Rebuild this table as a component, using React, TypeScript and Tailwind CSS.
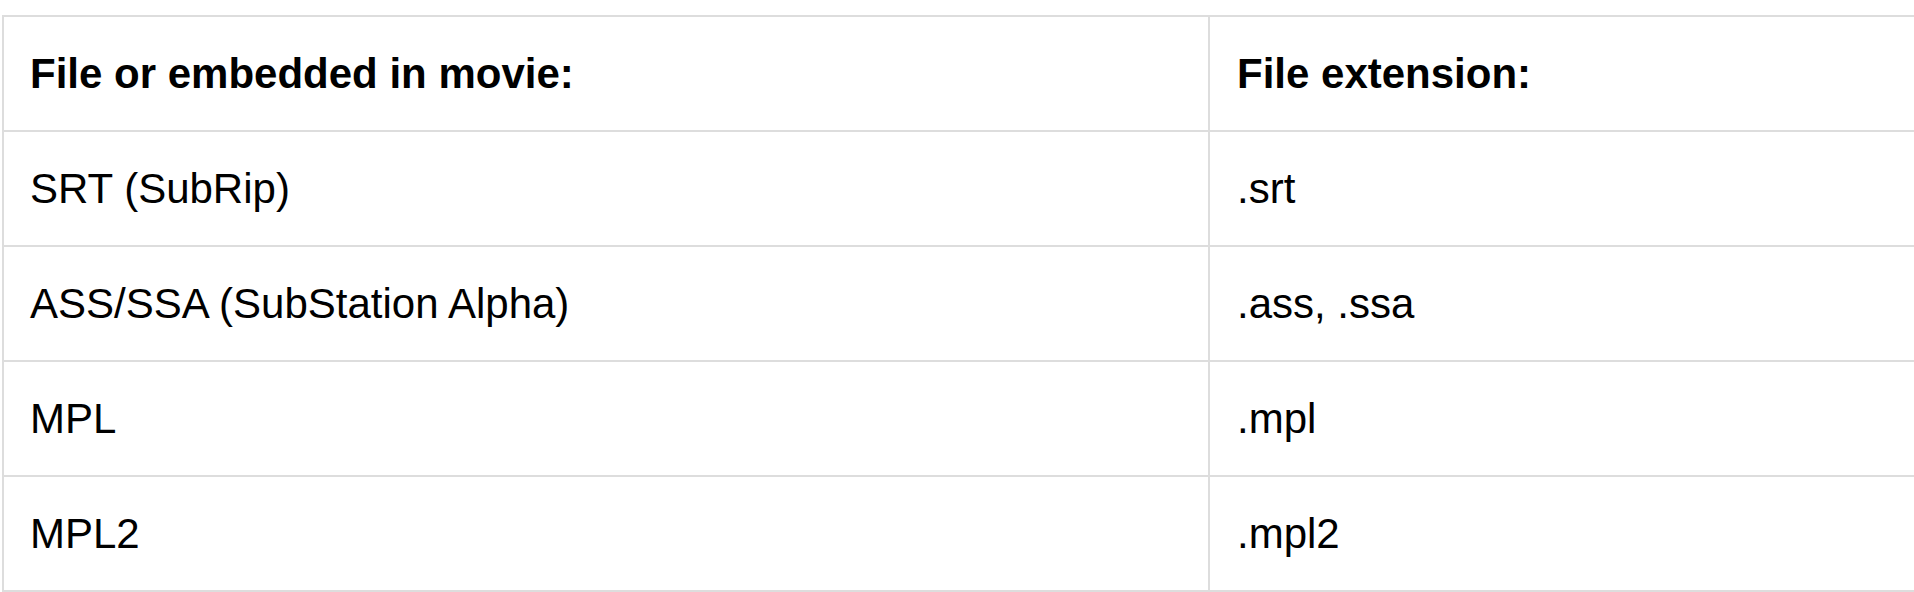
const rows: [string, string][] = [
  ['SRT (SubRip)', '.srt'],
  ['ASS/SSA (SubStation Alpha)', '.ass, .ssa'],
  ['MPL', '.mpl'],
  ['MPL2', '.mpl2'],
];

function Row({ left, right, header }: { left: string; right: string; header?: boolean }) {
  return (
    <div className="flex h-[115px] border-b-2 border-[#dddddd]">
      <div className="flex w-[1206px] shrink-0 items-center border-r-2 border-[#dddddd] pl-[26px]">
        <span className={header ? 'font-bold' : ''}>{left}</span>
      </div>
      <div className="flex flex-1 items-center pl-[27px]">
        <span className={header ? 'font-bold' : ''}>{right}</span>
      </div>
    </div>
  );
}

export default function App() {
  return (
    <div className="h-[592px] w-[1914px] overflow-hidden bg-white pl-[2px] pt-[15px]">
      <div
        className="w-[1960px] border-l-2 border-t-2 border-[#dddddd] text-[42px] leading-[48px] text-black"
        style={{ fontFamily: '"Liberation Sans", Arial, sans-serif' }}
      >
        <Row left="File or embedded in movie:" right="File extension:" header />
        {rows.map(([l, r]) => (
          <Row key={l} left={l} right={r} />
        ))}
      </div>
    </div>
  );
}
